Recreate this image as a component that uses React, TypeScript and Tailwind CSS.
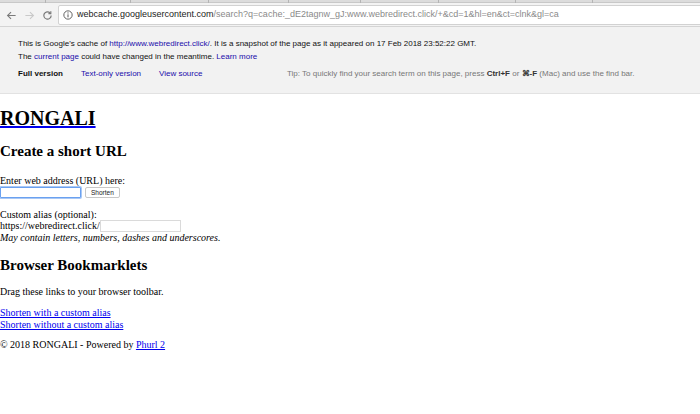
import React from "react";

export default function App() {
  const tabs = [45, 130, 208, 288, 360, 438, 515, 592];
  return (
    <div className="w-[700px] h-[414px] bg-white overflow-hidden">
      {/* Browser chrome */}
      <div className="relative h-[27px] bg-[#f3f3f3] border-b border-[#d4d4d4]">
        <div className="relative h-[3px] bg-[#dcdcdc] border-b border-[#c8c8c8]">
          {tabs.map((x) => (
            <div key={x} className="absolute top-0 h-[3px] w-px bg-[#b4b4b4]" style={{ left: x }} />
          ))}
        </div>
        <div className="flex items-center h-[23px] pt-[1px]">
          <div className="flex items-center w-[58px] shrink-0 pl-[2px]">
            <div className="w-[18px] flex justify-center">
              <svg width="11" height="11" viewBox="0 0 12 12" fill="none" stroke="#7a7a7a" strokeWidth="1.2">
                <path d="M10.5 6H1.8M5.5 2.2L1.7 6l3.8 3.8" />
              </svg>
            </div>
            <div className="w-[18px] flex justify-center">
              <svg width="11" height="11" viewBox="0 0 12 12" fill="none" stroke="#c9c9c9" strokeWidth="1.2">
                <path d="M1.5 6h8.7M6.5 2.2L10.3 6 6.5 9.8" />
              </svg>
            </div>
            <div className="w-[18px] flex justify-center">
              <svg width="11" height="11" viewBox="0 0 12 12" fill="none" stroke="#7a7a7a" strokeWidth="1.3">
                <path d="M10 6a4 4 0 1 1-1.2-2.9" />
                <path d="M9.6 1.3v2.6H7" />
              </svg>
            </div>
          </div>
          <div className="flex items-center h-[20px] flex-1 bg-white border border-[#d2d2d2] rounded-[2px] mr-[-2px] pl-[4px]" style={{ fontFamily: "'Liberation Sans', Arial, sans-serif" }}>
            <svg width="10" height="10" viewBox="0 0 12 12" className="mr-[4px]">
              <circle cx="6" cy="6" r="5" fill="none" stroke="#555" strokeWidth="1.1" />
              <path d="M6 5.2v3.6" stroke="#555" strokeWidth="1.2" />
              <circle cx="6" cy="3.5" r="0.7" fill="#555" />
            </svg>
            <span className="text-[9px] text-[#222] whitespace-nowrap">webcache.googleusercontent.com</span>
            <span className="text-[9px] text-[#8a8a8a] whitespace-nowrap">/search?q=cache:_dE2tagnw_gJ:www.webredirect.click/+&amp;cd=1&amp;hl=en&amp;ct=clnk&amp;gl=ca</span>
          </div>
        </div>
      </div>

      {/* Google cache banner */}
      <div className="h-[67px] bg-[#f2f2f2] border-b border-[#e2e2e2] pl-[18px] pt-[10px] text-[8px] leading-[13px] text-[#111]" style={{ fontFamily: "'Liberation Sans', Arial, sans-serif" }}>
        <div className="whitespace-nowrap">
          This is Google's cache of <span className="text-[#1a0dab]">http://www.webredirect.click/</span>. It is a snapshot of the page as it appeared on 17 Feb 2018 23:52:22 GMT.
        </div>
        <div className="whitespace-nowrap">
          The <span className="text-[#1a0dab]">current page</span> could have changed in the meantime. <span className="text-[#1a0dab]">Learn more</span>
        </div>
        <div className="flex items-center mt-[4px] whitespace-nowrap">
          <span className="font-bold w-[63px]">Full version</span>
          <span className="text-[#1a0dab] w-[78px]">Text-only version</span>
          <span className="text-[#1a0dab] w-[128px]">View source</span>
          <span className="text-[#777]">
            Tip: To quickly find your search term on this page, press <b className="text-[#333]">Ctrl+F</b> or <b className="text-[#333]">⌘-F</b> (Mac) and use the find bar.
          </span>
        </div>
      </div>

      {/* Page content */}
      <div className="text-[10px] leading-[11.5px] text-black" style={{ fontFamily: "'Liberation Serif', 'Times New Roman', serif" }}>
        <h1 className="text-[20px] leading-[23px] font-bold mt-[13px] mb-[13px]">
          <a className="underline decoration-[#0000ee] text-black">RONGALI</a>
        </h1>
        <h2 className="text-[15px] leading-[17px] font-bold mb-[12px]">Create a short URL</h2>
        <div className="pt-[3px]">Enter web address (URL) here:</div>
        <div className="flex items-center h-[12px]">
          <div className="w-[81px] h-[11px] bg-white border border-[#6aa1f0] rounded-[1px] shadow-[0_0_0_1px_#a9c8f5]" />
          <div className="ml-[4px] h-[11px] px-[5px] flex items-center border border-[#c8c8c8] rounded-[2px] bg-white text-[6.5px] text-[#222]" style={{ fontFamily: "'Liberation Sans', Arial, sans-serif" }}>
            Shorten
          </div>
        </div>
        <div className="mt-[10px]">Custom alias (optional):</div>
        <div className="flex items-center h-[12px]">
          <span>https://webredirect.click/</span>
          <div className="w-[81px] h-[12px] border border-[#dadada] bg-white" />
        </div>
        <div className="italic">May contain letters, numbers, dashes and underscores.</div>
        <h2 className="text-[15px] leading-[17px] font-bold mt-[13px] mb-[12px]">Browser Bookmarklets</h2>
        <p>Drag these links to your browser toolbar.</p>
        <p className="mt-[10px]">
          <a className="text-[#0000ee] underline">Shorten with a custom alias</a>
          <br />
          <a className="text-[#0000ee] underline">Shorten without a custom alias</a>
        </p>
        <p className="mt-[9px]">
          © 2018 RONGALI - Powered by <a className="text-[#0000ee] underline">Phurl 2</a>
        </p>
      </div>
    </div>
  );
}
